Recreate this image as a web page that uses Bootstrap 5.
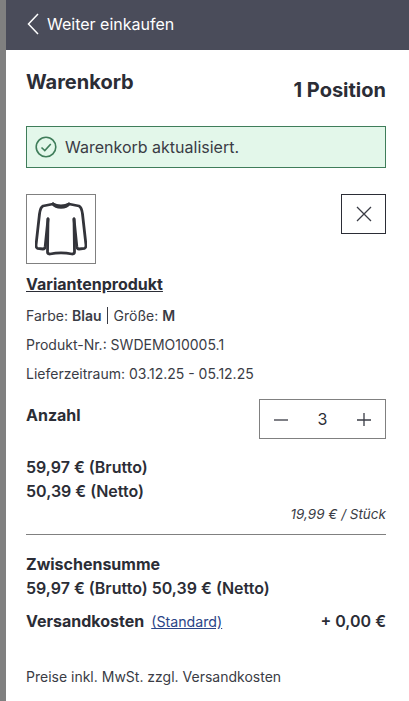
<!DOCTYPE html>
<html lang="de">
<head>
    <meta charset="UTF-8">
    <title>Warenkorb</title>
    <link href="https://cdn.jsdelivr.net/npm/bootstrap@5.3.3/dist/css/bootstrap.min.css" rel="stylesheet">
    <style>
        html, body { height: 100%; overflow: hidden; }
        body {
          background: #808080;
          font-family: Inter, "Liberation Sans", sans-serif;
          font-size: 14px;
          color: #2b2d36;
        }
        .cart-panel { margin-left: 6px; height: 701px; background: #fff; overflow: hidden; }
        .cart-head {
          height: 50px;
          padding-left: 21px;
          padding-bottom: 2px;
          background: #4a4c5a;
          color: #fff;
          font-size: 16px;
          font-weight: 400;
        }
        .cart-body { padding: 0 23px 0 20px; }
        .cart-title { margin: 0; padding-top: 21px; font-size: 20px; font-weight: 700; line-height: 23px; }
        .cart-count { padding-top: 29px; font-size: 20px; font-weight: 700; line-height: 23px; }
        .cart-alert {
          height: 42px;
          margin-top: 24px;
          padding-left: 8px;
          background: #e3f7ea;
          border: 1px solid #3f7d5a;
          font-size: 16px;
          color: #3a3c45;
        }
        .item-top { margin-top: 26px; }
        .thumb-box { width: 70px; height: 70px; border: 1px solid #808080; }
        .remove-btn {
          width: 45px;
          height: 40px;
          padding: 0;
          border: 1px solid #2b2d36;
          border-radius: 0;
          background: #fff;
        }
        .product-name { margin-top: 11px; font-size: 16px; font-weight: 700; line-height: 18px; color: #2b2d36; }
        .meta-line { margin-top: 12px; font-size: 14px; line-height: 17px; color: #3a3c45; }
        .meta-line b { font-weight: 600; }
        .meta-sep { border-left: 1px solid #3a3c45; margin: 0 6px 0 5px; }
        .qty-row { margin-top: 17px; }
        .qty-label { padding-top: 7px; font-size: 16px; font-weight: 700; line-height: 18px; }
        .qty-box { width: 127px; height: 40px; padding: 0 14px; border: 1px solid #808080; font-size: 16px; }
        .price-block { margin-top: 16px; }
        .price-line { font-size: 16px; font-weight: 600; line-height: 24px; }
        .unit-price { margin-top: 3px; font-size: 13.5px; font-style: italic; line-height: 16px; color: #3a3c45; }
        .cart-rule { margin: 12px 0 17px; border: 0; border-top: 1px solid #808080; opacity: 1; }
        .sum-line { font-size: 16px; font-weight: 600; line-height: 24px; }
        .sum-strong { font-weight: 700; }
        .ship-row { margin-top: 9px; }
        .ship-link { margin-left: 3px; font-size: 14.2px; font-weight: 400; color: #2b4487; }
        .tax-note { margin-top: 35px; font-size: 14px; line-height: 16px; color: #3a3c45; }
    </style>
</head>
<body>

<div class="cart-panel">
    <div class="cart-head d-flex align-items-center gap-2">
        <svg width="12" height="22" viewBox="0 0 12 22" fill="none" stroke="#fff" stroke-width="1.5"><path d="M11 1 1.500 11 11 21"/></svg>
        <span>Weiter einkaufen</span>
    </div>

    <div class="cart-body">
        <div class="d-flex justify-content-between">
            <h1 class="cart-title">Warenkorb</h1>
            <div class="cart-count">1 Position</div>
        </div>

        <div class="cart-alert d-flex align-items-center gap-2">
            <svg width="22" height="22" viewBox="0 0 22 22" fill="none" stroke="#3f7d5a" stroke-width="1.6"><circle cx="11" cy="11" r="9.800"/><path d="M6.500 11.500 9.800 14.600 15.800 8"/></svg>
            <span>Warenkorb aktualisiert.</span>
        </div>

        <div class="item-top d-flex justify-content-between align-items-start">
            <div class="thumb-box d-flex align-items-center justify-content-center">
                <svg width="52" height="54" viewBox="0 0 52 54" fill="none" stroke="#33343a" stroke-width="2.800" stroke-linejoin="round" stroke-linecap="round">
                    <path d="M18 2C22 4.500 30 4.500 34 2L44 4C46 5 47 8 47.500 12L51 43C51 45 50.500 46 49.500 46.300L44 47C42.500 47 42 46 41.800 44.500L39 17"/>
                    <path d="M18 2 8 4C6 5 5 8 4.500 12L1 43C1 45 1.500 46 2.500 46.300L8 47C9.500 47 10 46 10.200 44.500L13 17"/>
                    <path d="M13 17 12.500 50C12.500 51.500 13.500 52 15 52C22 50.500 30 50.500 37 52C38.500 52 39.500 51.500 39.500 50L39 17"/>
                    <path d="M18 2C21 6.500 31 6.500 34 2"/>
                </svg>
            </div>
            <button type="button" class="remove-btn d-flex align-items-center justify-content-center" aria-label="Entfernen">
                <svg width="16" height="16" viewBox="0 0 16 16" stroke="#3a3c45" stroke-width="1.300"><path d="M1 1 15 15M15 1 1 15"/></svg>
            </button>
        </div>

        <a href="#" class="product-name d-inline-block">Variantenprodukt</a>
        <div class="meta-line d-flex">Farbe:&nbsp;<b>Blau</b><span class="meta-sep"></span>Größe:&nbsp;<b>M</b></div>
        <div class="meta-line">Produkt-Nr.: SWDEMO10005.1</div>
        <div class="meta-line">Lieferzeitraum: 03.12.25 - 05.12.25</div>

        <div class="qty-row d-flex justify-content-between align-items-start">
            <div class="qty-label">Anzahl</div>
            <div class="qty-box d-flex align-items-center justify-content-between">
                <svg width="14" height="14" viewBox="0 0 14 14" stroke="#3a3c45" stroke-width="1.300"><path d="M0 8H14"/></svg>
                <span>3</span>
                <svg width="14" height="14" viewBox="0 0 14 14" stroke="#3a3c45" stroke-width="1.300"><path d="M0 8H14M7 1V15"/></svg>
            </div>
        </div>

        <div class="price-block">
            <div class="price-line">59,97 € (Brutto)</div>
            <div class="price-line">50,39 € (Netto)</div>
        </div>
        <div class="unit-price text-end">19,99 € / Stück</div>
        <hr class="cart-rule">

        <div class="sum-line sum-strong">Zwischensumme</div>
        <div class="sum-line">59,97 € (Brutto) 50,39 € (Netto)</div>
        <div class="ship-row d-flex justify-content-between sum-line">
            <div><span class="sum-strong">Versandkosten</span> <a href="#" class="ship-link">(Standard)</a></div>
            <div>+ 0,00 €</div>
        </div>
        <div class="tax-note">Preise inkl. MwSt. zzgl. Versandkosten</div>
    </div>
</div>

</body>
</html>
